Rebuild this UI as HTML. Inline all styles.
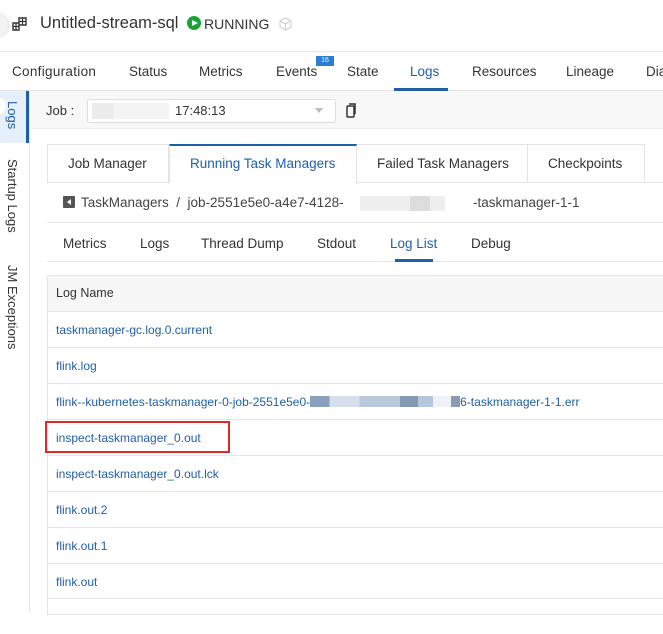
<!DOCTYPE html>
<html><head><meta charset="utf-8"><style>
*{box-sizing:border-box;margin:0;padding:0}
body{width:663px;height:612px;overflow:hidden;background:#fff;font-family:"Liberation Sans",sans-serif;color:#333;position:relative;font-size:13px}
.a{position:absolute;white-space:nowrap}
.link{color:#1f5fa8;font-size:12px}
.row{position:absolute;left:47px;width:620px;height:36px;border-top:1px solid #e6e6e6}
.row span{position:absolute;left:9px;top:11px;white-space:nowrap}
.row span span{position:static}
.t{font-size:13.5px}
</style></head><body>
<div class="a" style="left:0;top:0;width:663px;height:52px;background:#fff;border-bottom:1px solid #e8e8e8"></div>
<div class="a" style="left:-14px;top:14px;width:22px;height:22px;border-radius:50%;background:#f2f2f2;box-shadow:0 0 4px #ccc"></div>
<svg class="a" style="left:12px;top:17px" width="16" height="14" viewBox="0 0 16 14"><path d="M1 6h6v7H1zM7 1h7v7H7z" fill="none" stroke="#333" stroke-width="1.4"/><path d="M1 9.5h6M4 6v7M10.5 1v7M7 4.5h7" stroke="#333" stroke-width="1.2"/></svg>
<div class="a" style="left:40px;top:14px;font-size:16.5px;color:#333">Untitled-stream-sql</div>
<div class="a" style="left:187px;top:16px;width:14px;height:14px;border-radius:50%;background:#19a337"></div>
<div class="a" style="left:192px;top:19.5px;width:0;height:0;border-left:6px solid #fff;border-top:3.5px solid transparent;border-bottom:3.5px solid transparent"></div>
<div class="a" style="left:204px;top:16px;font-size:14px;color:#333">RUNNING</div>
<svg class="a" style="left:279px;top:17px" width="13" height="14" viewBox="0 0 13 14"><path d="M6.5 1L12 4v6l-5.5 3L1 10V4zM1 4l5.5 3L12 4M6.5 7v6" fill="none" stroke="#ccc" stroke-width="1"/></svg>
<div class="a" style="left:0;top:52px;width:663px;height:39px;border-bottom:1px solid #e3e3e3"></div>
<div class="a t" style="left:12px;top:64px;letter-spacing:0.3px">Configuration</div>
<div class="a t" style="left:129px;top:64px">Status</div>
<div class="a t" style="left:199px;top:64px">Metrics</div>
<div class="a t" style="left:276px;top:64px">Events</div>
<div class="a" style="left:316px;top:56px;width:18px;height:10px;background:#2d7dd2;color:#fff;font-size:7px;text-align:center;line-height:10px">16</div>
<div class="a t" style="left:347px;top:64px">State</div>
<div class="a t" style="left:410px;top:64px;color:#1f5fa8">Logs</div>
<div class="a" style="left:394px;top:88px;width:54px;height:3px;background:#1f5fa8"></div>
<div class="a t" style="left:472px;top:64px">Resources</div>
<div class="a t" style="left:566px;top:64px">Lineage</div>
<div class="a t" style="left:646px;top:64px">Dia</div>
<div class="a" style="left:0;top:91px;width:30px;height:521px;border-right:1px solid #e6e6e6"></div>
<div class="a" style="left:0;top:91px;width:29px;height:52px;background:#e6f0fa;border-right:3px solid #1f5fa8"></div>
<div class="a" style="left:-12px;top:97px;width:18px;height:18px;border-radius:50%;background:#fff"></div>
<div class="a" style="left:5px;top:101px;writing-mode:vertical-rl;font-size:13px;color:#1f5fa8">Logs</div>
<div class="a" style="left:5px;top:159px;writing-mode:vertical-rl;font-size:13px">Startup Logs</div>
<div class="a" style="left:5px;top:265px;writing-mode:vertical-rl;font-size:13px">JM Exceptions</div>
<div class="a" style="left:31px;top:91px;width:632px;height:38px;background:#f8f8f8;border-bottom:1px solid #ececec"></div>
<div class="a" style="left:46px;top:103px;font-size:13px">Job :</div>
<div class="a" style="left:87px;top:99px;width:249px;height:24px;background:#fff;border:1px solid #ddd;border-radius:3px"></div>
<div class="a" style="left:92px;top:103px;width:25px;height:16px;background:#ececec"></div>
<div class="a" style="left:114px;top:103px;width:55px;height:16px;background:#f4f4f4"></div>
<div class="a" style="left:175px;top:103px;font-size:13px">17:48:13</div>
<div class="a" style="left:315px;top:108px;border-top:5px solid #bbb;border-left:4px solid transparent;border-right:4px solid transparent"></div>
<svg class="a" style="left:345px;top:103px" width="12" height="15" viewBox="0 0 12 15"><rect x="2" y="3" width="7" height="11" rx="1" fill="none" stroke="#333" stroke-width="1.5"/><path d="M4 1h6v10" fill="none" stroke="#333" stroke-width="1.5"/></svg>
<div class="a" style="left:47px;top:144px;width:616px;height:39px;border-bottom:1px solid #e3e3e3"></div>
<div class="a" style="left:47px;top:144px;width:122px;height:39px;border:1px solid #e3e3e3"></div>
<div class="a" style="left:356px;top:144px;width:172px;height:39px;border:1px solid #e3e3e3"></div>
<div class="a" style="left:527px;top:144px;width:118px;height:39px;border:1px solid #e3e3e3"></div>
<div class="a" style="left:169px;top:144px;width:188px;height:40px;background:#fff;border-top:2px solid #1f5fa8;border-left:1px solid #e3e3e3;border-right:1px solid #e3e3e3"></div>
<div class="a t" style="left:68px;top:156px">Job Manager</div>
<div class="a t" style="left:190px;top:156px;color:#1f5fa8">Running Task Managers</div>
<div class="a t" style="left:377px;top:156px">Failed Task Managers</div>
<div class="a t" style="left:548px;top:156px">Checkpoints</div>
<div class="a" style="left:63px;top:196px;width:12px;height:12px;background:#555;border-radius:1px"></div>
<div class="a" style="left:67px;top:199px;border-right:4px solid #fff;border-top:3px solid transparent;border-bottom:3px solid transparent"></div>
<div class="a t" style="left:81px;top:195px;color:#444">TaskManagers &nbsp;/ &nbsp;job-2551e5e0-a4e7-4128-</div>
<div class="a" style="left:360px;top:196px;width:85px;height:15px;background:#eee"></div>
<div class="a" style="left:410px;top:196px;width:20px;height:15px;background:#ddd"></div>
<div class="a t" style="left:473px;top:195px;color:#444">-taskmanager-1-1</div>
<div class="a" style="left:47px;top:222px;width:616px;height:1px;background:#e6e6e6"></div>
<div class="a t" style="left:63px;top:236px">Metrics</div>
<div class="a t" style="left:140px;top:236px">Logs</div>
<div class="a t" style="left:201px;top:236px">Thread Dump</div>
<div class="a t" style="left:317px;top:236px">Stdout</div>
<div class="a t" style="left:390px;top:236px;color:#1f5fa8">Log List</div>
<div class="a t" style="left:471px;top:236px">Debug</div>
<div class="a" style="left:47px;top:261px;width:616px;height:1px;background:#e6e6e6"></div>
<div class="a" style="left:395px;top:259px;width:38px;height:3px;background:#1f5fa8"></div>
<div class="a" style="left:47px;top:275px;width:620px;height:340px;border:1px solid #e3e3e3;border-radius:3px 0 0 0"></div>
<div class="a" style="left:48px;top:276px;width:615px;height:35px;background:#f7f7f7"></div>
<div class="a" style="left:56px;top:286px;font-size:12.5px;color:#333">Log Name</div>
<div class="row" style="top:311px"><span class="link">taskmanager-gc.log.0.current</span></div>
<div class="row" style="top:347px"><span class="link">flink.log</span></div>
<div class="row" style="top:383px"><span class="link">flink--kubernetes-taskmanager-0-job-2551e5e0-<span style="display:inline-block;width:150px;height:11px;background:linear-gradient(90deg,#8aa0bd 0 13%,#d5e0ec 13% 33%,#b8c9dc 33% 60%,#8699b3 60% 72%,#b3c6dc 72% 82%,#eef2f6 82% 94%,#8a9cb4 94%);vertical-align:-1px"></span>6-taskmanager-1-1.err</span></div>
<div class="row" style="top:419px"><span class="link">inspect-taskmanager_0.out</span></div>
<div class="row" style="top:455px"><span class="link">inspect-taskmanager_0.out.lck</span></div>
<div class="row" style="top:491px"><span class="link">flink.out.2</span></div>
<div class="row" style="top:527px"><span class="link">flink.out.1</span></div>
<div class="row" style="top:563px"><span class="link">flink.out</span></div>
<div class="row" style="top:598px"></div>
<div class="a" style="left:45px;top:421px;width:185px;height:32px;border:2px solid #d92b2b"></div>
</body></html>
